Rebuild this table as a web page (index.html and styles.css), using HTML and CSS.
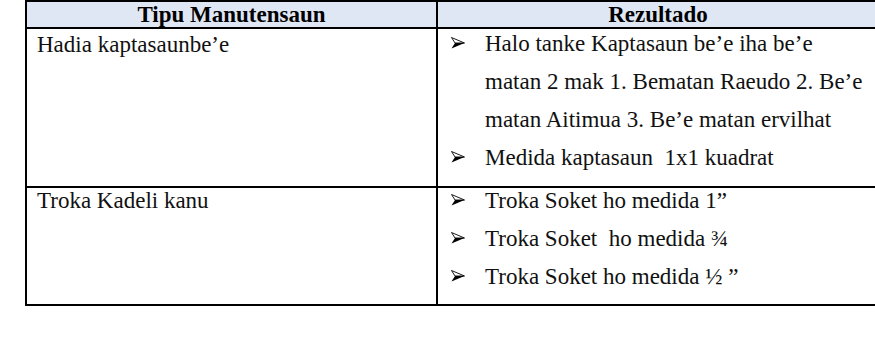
FILE: index.html
```html
<!DOCTYPE html>
<html>
<head>
<meta charset="utf-8">
<link rel="stylesheet" href="styles.css">
</head>
<body>
<table class="tbl">
  <thead>
    <tr>
      <th class="col-a">Tipu Manutensaun</th>
      <th class="col-b">Rezultado</th>
    </tr>
  </thead>
  <tbody>
    <tr class="row-1">
      <td class="cell-a"><div class="txt">Hadia kaptasaunbe’e</div></td>
      <td class="cell-b">
        <ul class="list">
          <li><svg class="arrow" viewBox="0 0 14 12" width="14" height="12"><path d="M0.5 0.5 L13.5 6 L4 6 Z" fill="#fff" stroke="#000" stroke-width="0.9" stroke-linejoin="miter"/><path d="M4 6 L13.5 6 L0.5 11.5 Z" fill="#000"/></svg>Halo tanke Kaptasaun be’e iha be’e<br>matan 2 mak 1. Bematan Raeudo 2. Be’e<br>matan Aitimua 3. Be’e matan ervilhat</li>
          <li><svg class="arrow" viewBox="0 0 14 12" width="14" height="12"><path d="M0.5 0.5 L13.5 6 L4 6 Z" fill="#fff" stroke="#000" stroke-width="0.9"/><path d="M4 6 L13.5 6 L0.5 11.5 Z" fill="#000"/></svg>Medida kaptasaun&nbsp; 1x1 kuadrat</li>
        </ul>
      </td>
    </tr>
    <tr class="row-2">
      <td class="cell-a"><div class="txt">Troka Kadeli kanu</div></td>
      <td class="cell-b">
        <ul class="list">
          <li><svg class="arrow" viewBox="0 0 14 12" width="14" height="12"><path d="M0.5 0.5 L13.5 6 L4 6 Z" fill="#fff" stroke="#000" stroke-width="0.9"/><path d="M4 6 L13.5 6 L0.5 11.5 Z" fill="#000"/></svg>Troka Soket ho medida 1”</li>
          <li><svg class="arrow" viewBox="0 0 14 12" width="14" height="12"><path d="M0.5 0.5 L13.5 6 L4 6 Z" fill="#fff" stroke="#000" stroke-width="0.9"/><path d="M4 6 L13.5 6 L0.5 11.5 Z" fill="#000"/></svg>Troka Soket&nbsp; ho medida ¾</li>
          <li><svg class="arrow" viewBox="0 0 14 12" width="14" height="12"><path d="M0.5 0.5 L13.5 6 L4 6 Z" fill="#fff" stroke="#000" stroke-width="0.9"/><path d="M4 6 L13.5 6 L0.5 11.5 Z" fill="#000"/></svg>Troka Soket ho medida ½ ”</li>
        </ul>
      </td>
    </tr>
  </tbody>
</table>
</body>
</html>
```
FILE: styles.css
```css
html, body {
  margin: 0;
  padding: 0;
  background: #ffffff;
}
body {
  font-family: "Liberation Serif", "Times New Roman", serif;
  color: #111111;
}
.tbl {
  margin-left: 25px;
  border-collapse: collapse;
  table-layout: fixed;
  width: 853px;
  border-left: 2px solid #000;
  border-top: 2px solid #000;
  border-bottom: 2px solid #000;
}
.tbl th {
  background: #dfe7f5;
  font-weight: bold;
  font-size: 23px;
  line-height: 25px;
  height: 25px;
  padding: 0;
  text-align: center;
  border-bottom: 2px solid #000;
  color: #000;
}
.col-a {
  width: 409px;
  border-right: 2px solid #000;
}
.tbl td {
  vertical-align: top;
  padding: 0;
  font-size: 23px;
}
.cell-a {
  border-right: 2px solid #000;
  border-bottom: 2px solid #000;
}
.cell-b {
  border-bottom: 2px solid #000;
}
.txt {
  line-height: 38px;
  margin-top: -3px;
  padding-left: 10px;
}
.row-2 .txt {
  margin-top: -6px;
}
.list {
  list-style: none;
  margin: -4px 0 9px 0;
  padding: 0 0 0 47px;
  line-height: 38px;
}
.row-2 .list {
  margin: -6px 0 8px 0;
}
.list li {
  position: relative;
}
.arrow {
  position: absolute;
  left: -34px;
  top: 12px;
}
```
